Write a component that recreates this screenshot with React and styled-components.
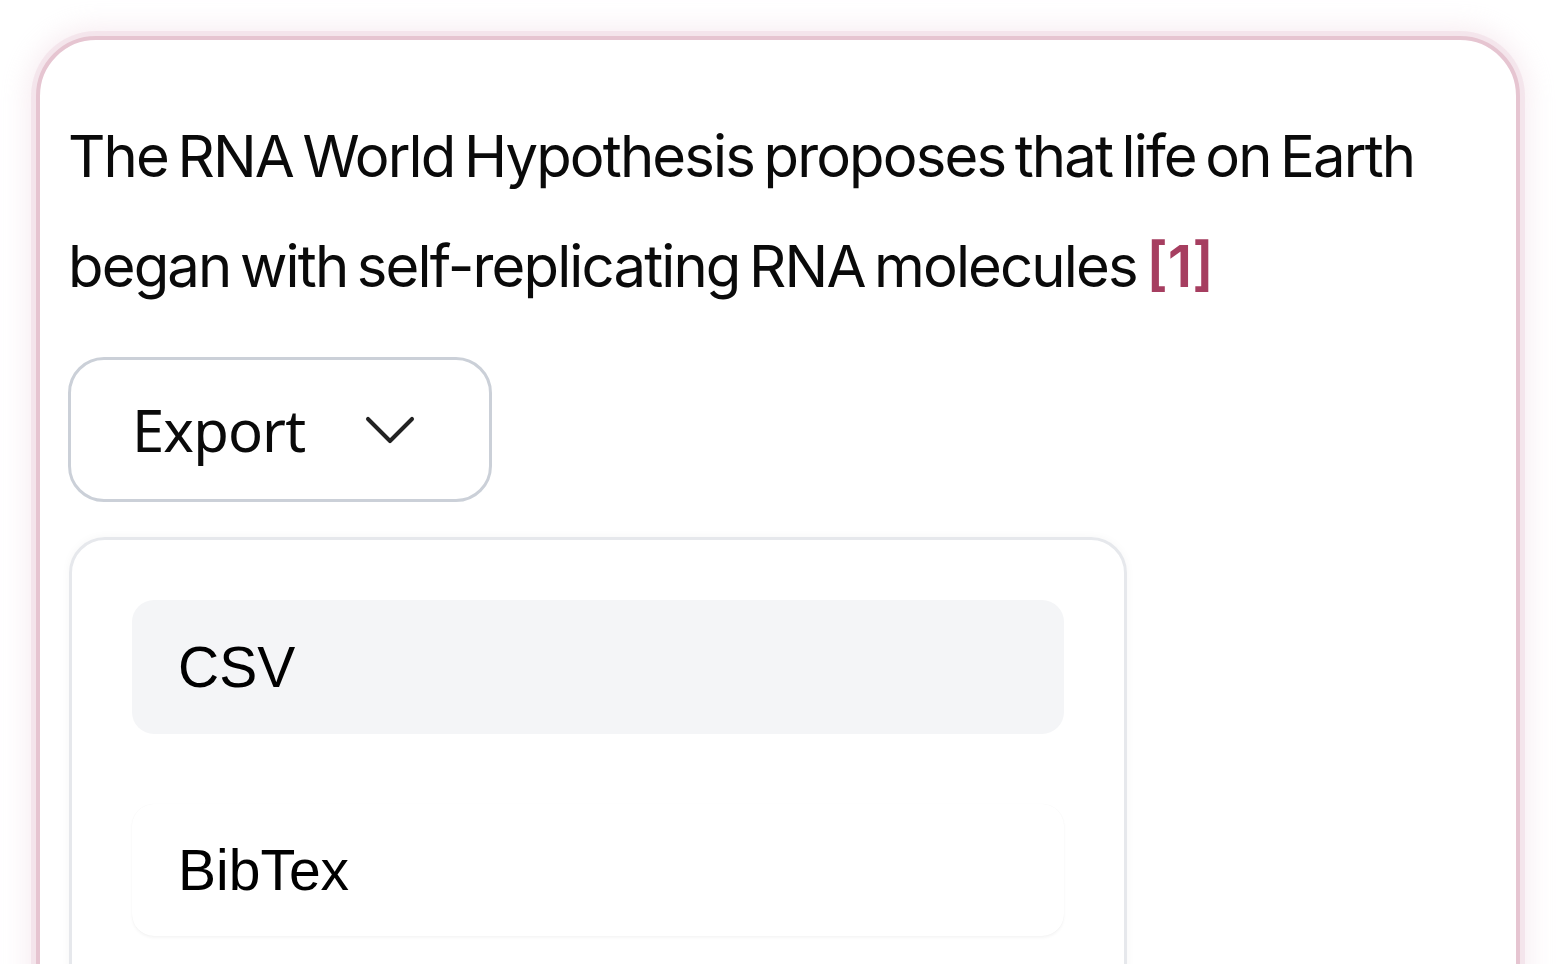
import React from "react";
import styled, { createGlobalStyle } from "styled-components";

const Global = createGlobalStyle`
  html, body { margin: 0; padding: 0; background: #ffffff; }
  body { font-family: Inter, "Noto Sans", sans-serif; overflow: hidden; }
  * { box-sizing: border-box; }
`;

const Page = styled.div`
  padding: 36px;
  height: 964px;
  overflow: hidden;
`;

const Card = styled.div`
  border: 4px solid #e6c5d1;
  border-radius: 60px;
  min-height: 1100px;
  padding: 61px 28px 40px 28px;
  display: flex;
  flex-direction: column;
  align-items: flex-start;
  gap: 36px;
  background: #fff;
  box-shadow: 0 0 0 5px rgba(232, 200, 212, 0.3), 0 0 24px 10px rgba(232, 200, 212, 0.3);
`;

const Para = styled.p`
  margin: 0;
  font-family: Inter, sans-serif;
  font-size: 58px;
  line-height: 110px;
  color: #0a0a0a;
  letter-spacing: -1.85px;
  word-spacing: -5px;
  max-width: 1420px;
`;

const Cite = styled.span`
  color: #a63e60;
  font-weight: 600;
  letter-spacing: 0;
`;

const ExportButton = styled.button`
  display: flex;
  align-items: center;
  gap: 41px;
  height: 145px;
  padding: 0 55px 0 61px;
  border: 3px solid #cbd0d8;
  border-radius: 36px;
  background: #fff;
  font-family: "Noto Sans", sans-serif;
  font-size: 58px;
  font-weight: 400;
  letter-spacing: -0.9px;
  color: #0a0a0a;
  cursor: pointer;
`;

const Menu = styled.div`
  margin-left: 1px;
  margin-top: -1px;
  width: 1058px;
  min-height: 520px;
  border: 3px solid #e6e8ec;
  border-radius: 36px;
  padding: 60px 60px;
  display: flex;
  flex-direction: column;
  gap: 70px;
  box-shadow: 0 0 10px rgba(0, 0, 0, 0.04);
`;

const Item = styled.div`
  height: ${(p) => (p.$active ? "134px" : "132px")};
  border-radius: 22px;
  display: flex;
  align-items: center;
  padding-left: 46px;
  font-family: "Liberation Sans", Arial, sans-serif;
  font-size: 57px;
  color: #000;
  background: ${(p) => (p.$active ? "#f4f5f7" : "#ffffff")};
  box-shadow: ${(p) => (p.$active ? "none" : "0 2px 3px rgba(0,0,0,0.04), 0 0 1px rgba(0,0,0,0.05)")};
`;

const Chevron = () => (
  <svg width="88" height="88" viewBox="0 0 24 24" fill="none" stroke="#222" strokeWidth="1.1" strokeLinecap="round" strokeLinejoin="round">
    <path d="m6 9 6 6 6-6" />
  </svg>
);

export default function App() {
  return (
    <>
      <Global />
      <Page>
        <Card>
          <Para>
            The RNA World Hypothesis proposes that life on Earth began with self-replicating RNA molecules <Cite>[1]</Cite>
          </Para>
          <ExportButton>
            Export
            <Chevron />
          </ExportButton>
          <Menu>
            <Item $active>CSV</Item>
            <Item>BibTex</Item>
          </Menu>
        </Card>
      </Page>
    </>
  );
}
